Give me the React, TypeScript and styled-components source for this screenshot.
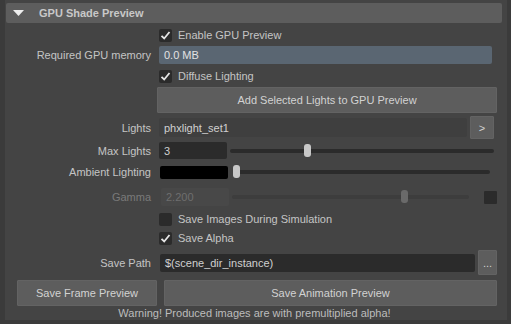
import React from 'react';
import styled, { createGlobalStyle } from 'styled-components';

const GlobalStyle = createGlobalStyle`
  html, body {
    margin: 0;
    padding: 0;
    background: #3b3b3b;
  }
  body {
    font-family: "Liberation Sans", Arial, sans-serif;
    font-size: 11px;
    color: #c4c4c4;
  }
`;

const Frame = styled.div`
  width: 511px;
  height: 324px;
  padding: 0 4px 4px 5px;
  box-sizing: border-box;
  overflow: hidden;
`;

const Panel = styled.div`
  height: 320px;
  background: #444444;
  padding-top: 3px;
  box-sizing: border-box;
  overflow: hidden;
`;

const Header = styled.div`
  display: flex;
  align-items: center;
  height: 20px;
  margin: 0 5px 0 1px;
  background: #5d5d5d;
  border-radius: 2px;
  font-weight: bold;
  color: #c8c8c8;
`;

const Arrow = styled.svg`
  margin: 0 15px 0 7px;
`;

const Row = styled.div<{ $h: number; $mt: number }>`
  display: grid;
  grid-template-columns: 146px 1fr;
  column-gap: 8px;
  align-items: center;
  height: ${(p) => p.$h}px;
  margin-top: ${(p) => p.$mt}px;
  padding-right: 10px;
`;

const Label = styled.div<{ $disabled?: boolean }>`
  text-align: right;
  white-space: nowrap;
  color: ${(p) => (p.$disabled ? '#7a7a7a' : '#c4c4c4')};
`;

const Controls = styled.div`
  display: flex;
  align-items: center;
  gap: 3px;
  height: 100%;
  min-width: 0;
`;

const CheckLabel = styled.label`
  display: flex;
  align-items: center;
  gap: 6px;
  white-space: nowrap;
`;

const Box = styled.span`
  display: flex;
  align-items: center;
  justify-content: center;
  width: 13px;
  height: 13px;
  background: #2b2b2b;
  border-radius: 2px;
`;

const Field = styled.div<{ $bg: string; $w?: number; $h: number; $ml?: number; $color?: string }>`
  flex: ${(p) => (p.$w ? `0 0 ${p.$w}px` : '1')};
  height: ${(p) => p.$h}px;
  margin-left: ${(p) => p.$ml ?? 0}px;
  background: ${(p) => p.$bg};
  color: ${(p) => p.$color ?? '#d0d0d0'};
  border-radius: 2px;
  display: flex;
  align-items: center;
  padding-left: 5px;
  box-sizing: border-box;
  white-space: nowrap;
  overflow: hidden;
`;

const Button = styled.button<{ $h: number; $w?: number }>`
  flex: ${(p) => (p.$w ? `0 0 ${p.$w}px` : '1')};
  height: ${(p) => p.$h}px;
  background: #5d5d5d;
  border: 1px solid #636363;
  border-radius: 1px;
  color: #d2d2d2;
  font-family: inherit;
  font-size: 11px;
  padding: 0;
  box-sizing: border-box;
`;

const Slider = styled.div<{ $dim?: boolean }>`
  position: relative;
  flex: 1;
  height: 14px;
  display: flex;
  align-items: center;
`;

const Track = styled.div<{ $dim?: boolean }>`
  width: 100%;
  height: 4px;
  border-radius: 2px;
  background: ${(p) => (p.$dim ? '#3d3d3d' : '#2b2b2b')};
`;

const Handle = styled.div<{ $dim?: boolean }>`
  position: absolute;
  top: 0;
  width: 7px;
  height: 13px;
  border-radius: 3px;
  background: ${(p) => (p.$dim ? '#6a6a6a' : '#c8c8c8')};
`;

const Swatch = styled.div<{ $color: string }>`
  flex: 0 0 13px;
  height: 13px;
  margin-left: 12px;
  background: ${(p) => p.$color};
  border-radius: 1px;
`;

const ButtonRow = styled.div`
  display: flex;
  gap: 7px;
  height: 26px;
  margin-top: 5px;
  padding: 0 10px 0 12px;
`;

const Warning = styled.div`
  height: 14px;
  line-height: 14px;
  text-align: center;
  padding-right: 3px;
  color: #bdbdbd;
`;

const Check = ({ checked, text }: { checked: boolean; text: string }) => (
  <CheckLabel>
    <Box>
      {checked && (
        <svg width="11" height="11" viewBox="0 0 11 11">
          <path d="M1.5 5.8 L4.2 8.5 L9.5 2" fill="none" stroke="#e6e6e6" strokeWidth="1.8" />
        </svg>
      )}
    </Box>
    {text}
  </CheckLabel>
);

const Range = ({ pos, dim }: { pos: number; dim?: boolean }) => (
  <Slider>
    <Track $dim={dim} />
    <Handle $dim={dim} style={{ left: `${pos * 100}%` }} />
  </Slider>
);

const App = () => (
  <Frame>
    <GlobalStyle />
    <Panel>
      <Header>
        <Arrow width="11" height="6" viewBox="0 0 11 6">
          <path d="M0 0 H11 L5.5 6 Z" fill="#eeeeee" />
        </Arrow>
        GPU Shade Preview
      </Header>

      <Row $h={18} $mt={3}>
        <Label />
        <Controls>
          <Check checked text="Enable GPU Preview" />
        </Controls>
      </Row>

      <Row $h={18} $mt={2}>
        <Label>Required GPU memory</Label>
        <Controls style={{ paddingRight: 5 }}>
          <Field $bg="#5a6672" $h={18} $color="#e2e2e2">0.0 MB</Field>
        </Controls>
      </Row>

      <Row $h={18} $mt={3}>
        <Label />
        <Controls>
          <Check checked text="Diffuse Lighting" />
        </Controls>
      </Row>

      <Row $h={26} $mt={2}>
        <Label />
        <Controls style={{ marginLeft: -2 }}>
          <Button $h={26}>Add Selected Lights to GPU Preview</Button>
        </Controls>
      </Row>

      <Row $h={23} $mt={3}>
        <Label>Lights</Label>
        <Controls style={{ paddingRight: 3 }}>
          <Field $bg="#3f3f3f" $h={19}>phxlight_set1</Field>
          <Button $h={23} $w={24}>&gt;</Button>
        </Controls>
      </Row>

      <Row $h={17} $mt={3}>
        <Label>Max Lights</Label>
        <Controls style={{ paddingRight: 3 }}>
          <Field $bg="#2b2b2b" $w={68} $h={17}>3</Field>
          <Range pos={74 / 264} />
        </Controls>
      </Row>

      <Row $h={18} $mt={4}>
        <Label>Ambient Lighting</Label>
        <Controls style={{ paddingRight: 7, gap: 5 }}>
          <Field $bg="#000000" $w={68} $h={13} $ml={1} />
          <Range pos={0} />
        </Controls>
      </Row>

      <Row $h={18} $mt={7}>
        <Label $disabled>Gamma</Label>
        <Controls>
          <Field $bg="#484848" $w={68} $h={18} $ml={2} $color="#6e6e6e">2.200</Field>
          <Range pos={169 / 237} dim />
          <Swatch $color="#2b2b2b" />
        </Controls>
      </Row>

      <Row $h={18} $mt={4}>
        <Label />
        <Controls>
          <Check checked={false} text="Save Images During Simulation" />
        </Controls>
      </Row>

      <Row $h={18} $mt={1}>
        <Label />
        <Controls>
          <Check checked text="Save Alpha" />
        </Controls>
      </Row>

      <Row $h={25} $mt={3}>
        <Label>Save Path</Label>
        <Controls>
          <Field $bg="#2b2b2b" $h={18} $ml={1}>$(scene_dir_instance)</Field>
          <Button $h={25} $w={19}>...</Button>
        </Controls>
      </Row>

      <ButtonRow>
        <Button $h={26} $w={140}>Save Frame Preview</Button>
        <Button $h={26}>Save Animation Preview</Button>
      </ButtonRow>

      <Warning>Warning! Produced images are with premultiplied alpha!</Warning>
    </Panel>
  </Frame>
);

export default App;
